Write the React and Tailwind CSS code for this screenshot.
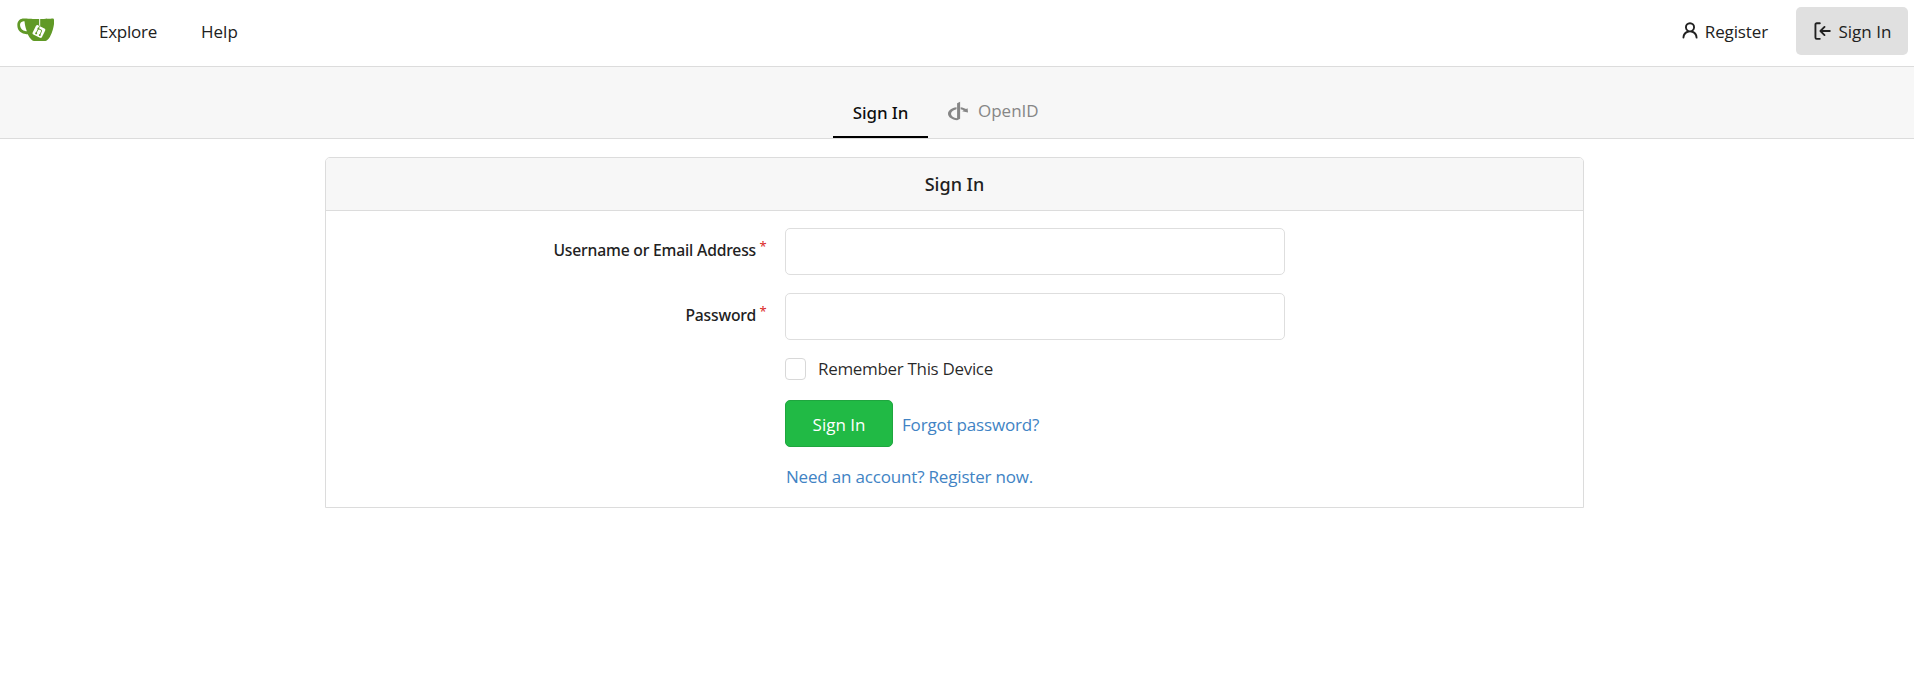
import React from 'react';
import { SiOpenid } from 'react-icons/si';

function Logo() {
  return (
    <svg viewBox="0 0 640 640" className="h-[37.5px] w-[37.5px]" aria-label="Home">
      <path fill="#fff" d="M395.9 484.2l-126.9-61c-12.5-6-17.9-21.2-11.8-33.8l61-126.9c6-12.5 21.2-17.9 33.8-11.8 17.2 8.3 27.1 13 27.1 13l-.1-109.2 16.7-.1.1 117.1s57.4 24.2 83.1 40.1c3.7 2.3 10.2 6.8 12.9 14.4 2.1 6.1 2 13.1-1 19.3l-61 126.9c-6.2 12.7-21.4 18.1-33.9 12z" />
      <path fill="#609926" d="M622.7 149.8c-4.1-4.1-9.6-4-9.6-4s-117.2 6.6-177.9 8c-13.3.3-26.5.6-39.6.7v117.2c-5.5-2.6-11.1-5.3-16.6-7.9 0-36.4-.1-109.2-.1-109.2-29 .4-89.2-2.2-89.2-2.2s-141.4-7.1-156.8-8.5c-9.8-.6-22.5-2.1-39 1.5-8.7 1.8-33.5 7.4-53.8 26.9C-4.9 212.4 6.6 276.2 8 285.8c1.7 11.7 6.9 44.2 31.7 72.5 45.8 56.1 144.4 54.8 144.4 54.8s12.1 28.9 30.6 55.5c25 33.1 50.7 58.9 75.7 62 63 0 188.9-.1 188.9-.1s12 .1 28.3-10.3c14-8.5 26.5-23.4 26.5-23.4s12.9-13.8 30.9-45.3c5.5-9.7 10.1-19.1 14.1-28 0 0 55.2-117.1 55.2-231.1-1.1-34.5-9.6-40.6-11.6-42.6zM125.6 353.9c-25.9-8.5-36.9-18.7-36.9-18.7S69.6 321.8 60 295.4c-16.5-44.2-1.4-71.2-1.4-71.2s8.4-22.5 38.5-30c13.8-3.7 31-3.1 31-3.1s7.1 59.4 15.7 94.2c7.2 29.2 24.8 77.7 24.8 77.7s-26.1-3.1-43-9.1zm300.3 107.6s-6.1 14.5-19.6 15.4c-5.8.4-10.3-1.2-10.3-1.2s-.3-.1-5.3-2.1l-112.9-55s-10.9-5.7-12.8-15.6c-2.2-8.1 2.7-18.1 2.7-18.1L322 273s4.8-9.7 12.2-13c.6-.3 2.3-1 4.5-1.5 8.1-2.1 18 2.8 18 2.8l110.7 53.700s12.600 5.700 15.300 16.200c1.900 7.400-.5 14-1.800 17.200-6.300 15.400-55 113.100-55 113.100z" />
      <path fill="#609926" d="M326.8 380.1c-8.2.1-15.4 5.8-17.3 13.8-1.9 8 2 16.3 9.1 20 7.7 4 17.5 1.8 22.7-5.4 5.1-7.1 4.3-16.9-1.8-23.1l24-49.1c1.5.1 3.7.2 6.2-.5 4.1-.9 7.1-3.6 7.1-3.6 4.2 1.8 8.6 3.8 13.2 6.1 4.8 2.4 9.3 4.9 13.4 7.3.9.5 1.8 1.1 2.8 1.9 1.6 1.3 3.4 3.1 4.7 5.5 1.9 5.5-1.9 14.9-1.9 14.9-2.3 7.6-18.4 40.6-18.4 40.6-8.1-.2-15.3 5-17.7 12.5-2.6 8.1 1.1 17.3 8.9 21.3 7.8 4 17.4 1.7 22.5-5.3 5-6.8 4.6-16.3-1.1-22.6 1.9-3.7 3.7-7.4 5.6-11.3 5-10.4 13.5-30.4 13.5-30.4.9-1.7 5.7-10.3 2.7-21.3-2.5-11.4-12.6-16.7-12.6-16.7-12.2-7.9-29.2-15.2-29.2-15.2s0-4.1-1.1-7.1c-1.1-3.1-2.8-5.1-3.9-6.3 4.7-9.7 9.4-19.3 14.1-29-4.1-2-8.1-4-12.2-6.1-4.8 9.8-9.7 19.7-14.5 29.5-6.7-.1-12.9 3.5-16.1 9.4-3.4 6.3-2.7 14.1 1.9 19.8l-24.6 50.4z" />
    </svg>
  );
}

function PersonIcon() {
  return (
    <svg viewBox="0 0 16 16" className="h-5 w-5" fill="currentColor">
      <path d="M10.561 8.073a6 6 0 0 1 3.432 5.142.75.75 0 1 1-1.498.07 4.5 4.5 0 0 0-8.99 0 .75.75 0 0 1-1.498-.07 6 6 0 0 1 3.431-5.142 3.999 3.999 0 1 1 5.123 0ZM10.5 5a2.5 2.5 0 1 0-5 0 2.5 2.5 0 0 0 5 0Z" />
    </svg>
  );
}

function SignInIcon() {
  return (
    <svg viewBox="0 0 16 16" className="h-5 w-5" fill="currentColor">
      <path d="M2 2.75C2 1.784 2.784 1 3.75 1h2.5a.75.75 0 0 1 0 1.5h-2.5a.25.25 0 0 0-.25.25v10.5c0 .138.112.25.25.25h2.5a.75.75 0 0 1 0 1.5h-2.5A1.75 1.75 0 0 1 2 13.25Zm6.56 4.5h5.69a.75.75 0 0 1 0 1.5H8.56l1.97 1.97a.749.749 0 0 1-.326 1.275.749.749 0 0 1-.734-.215L6.22 8.53a.75.75 0 0 1 0-1.06l3.25-3.25a.749.749 0 0 1 1.275.326.749.749 0 0 1-.215.734Z" />
    </svg>
  );
}

function Navbar() {
  return (
    <header className="flex h-[67px] items-center border-b border-[#dcdcdc] bg-white pr-1.5 pb-1 pl-[16.5px]">
      <nav className="flex items-center">
        <a href="#" className="-mt-1"><Logo /></a>
        <a href="#" className="ml-[45px] pt-px tracking-[-0.25px]">Explore</a>
        <a href="#" className="ml-[44px] pt-px">Help</a>
      </nav>
      <nav className="ml-auto flex items-center">
        <a href="#" className="flex items-center gap-[5px]">
          <PersonIcon />
          <span className="pt-0.5 tracking-[-0.13px]">Register</span>
        </a>
        <a href="#" className="ml-[28px] flex h-12 w-[112px] items-center gap-[7px] rounded-[5px] bg-[#e0e0e0] pl-[15.5px]">
          <SignInIcon />
          <span className="pt-0.5">Sign In</span>
        </a>
      </nav>
    </header>
  );
}

function AuthTabs() {
  return (
    <div className="flex h-[72px] items-end border-b border-[#dcdcdc] bg-[#f7f7f7] pl-[833px]">
      <a href="#" className="w-[95px] border-b-2 border-black pb-[11px] text-center font-['Noto_Sans',sans-serif] font-medium tracking-[-0.1px] text-black/95">
        Sign In
      </a>
      <a href="#" className="flex items-center gap-[10px] px-5 pb-[15px] text-[#868686]">
        <SiOpenid size={20} />
        <span>OpenID</span>
      </a>
    </div>
  );
}

function Field({ id, label, type }) {
  return (
    <div className="flex h-[47px] items-center">
      <label htmlFor={id} className="flex w-[440.5px] justify-end pb-[3px] font-['Noto_Sans',sans-serif] text-[15.7px] font-medium tracking-[-0.19px]">
        {label}
        <span className="ml-[3.5px] -mt-1 text-[13px] font-normal text-[#db2828]">*</span>
      </label>
      <input id={id} type={type} className="ml-[18.5px] h-[47px] w-[500px] rounded-[5px] border border-[#dedede] bg-white px-4 outline-none" />
    </div>
  );
}

function SignInPanel() {
  return (
    <section className="mt-[18px] ml-[325px] w-[1259px] rounded-t-[5px] border border-[#dcdcdc]">
      <h4 className="flex h-[53px] items-center justify-center rounded-t-[4px] border-b border-[#dcdcdc] bg-[#f7f7f7] pb-px font-['Noto_Sans',sans-serif] text-[18px] font-medium">
        Sign In
      </h4>
      <form className="flex h-[296px] flex-col gap-[18px] pt-[17px]" onSubmit={(e) => e.preventDefault()}>
        <Field id="user" label="Username or Email Address" type="text" />
        <Field id="password" label="Password" type="password" />
        <div className="ml-[459px] flex flex-col">
          <label className="flex h-[22px] items-center gap-[12px] text-black/85">
            <input type="checkbox" className="h-[22px] w-[21px] appearance-none rounded-[4px] border border-[#d8d8d8] bg-white" />
            <span className="tracking-[-0.32px]">Remember This Device</span>
          </label>
          <div className="mt-5 flex h-[47px] items-center gap-2">
            <button className="h-[47px] w-[108px] rounded-[5px] border border-[#1fa63f] bg-[#21ba45] pt-0.5 text-white">
              Sign In
            </button>
            <a href="#" className="pt-0.5 pl-px tracking-[-0.18px] text-[#4183c4]">Forgot password?</a>
          </div>
          <a href="#" className="mt-[18px] pl-px tracking-[-0.18px] text-[#4183c4]">Need an account? Register now.</a>
        </div>
      </form>
    </section>
  );
}

export default function App() {
  return (
    <div className="min-h-screen bg-white font-['Open_Sans',sans-serif] text-[17px] leading-6 text-[#212121]">
      <Navbar />
      <AuthTabs />
      <main>
        <SignInPanel />
      </main>
    </div>
  );
}
